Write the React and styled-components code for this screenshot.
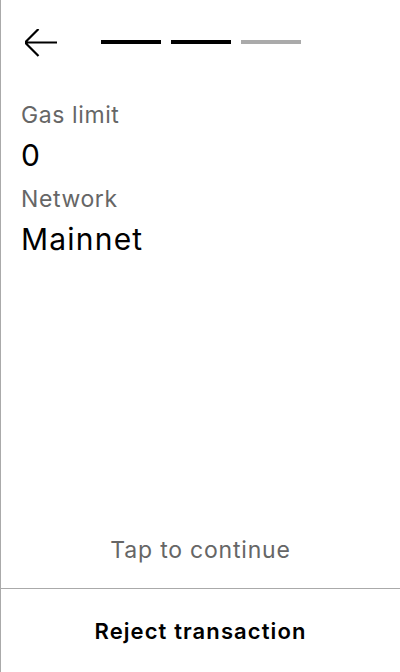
import React from "react";
import styled, { createGlobalStyle } from "styled-components";

const GlobalStyle = createGlobalStyle`
  html, body {
    margin: 0;
    padding: 0;
    background: #fff;
  }
  body {
    font-family: Inter, "Noto Sans", sans-serif;
  }
`;

const steps = [true, true, false];

const fields = [
  { label: "Gas limit", value: "0" },
  { label: "Network", value: "Mainnet" },
];

const Screen = styled.div`
  height: 672px;
  display: flex;
  flex-direction: column;
  border-left: 1px solid #aaaaaa;
  box-sizing: border-box;
`;

const Header = styled.div`
  display: flex;
  align-items: center;
  height: 86px;
  padding-left: 24px;
  gap: 44px;
`;

const BackButton = styled.button`
  background: none;
  border: none;
  padding: 0;
  width: 32px;
  height: 28px;
  display: flex;
  cursor: pointer;
`;

const Steps = styled.div`
  display: flex;
  gap: 10px;
  margin-top: -2px;
`;

const Step = styled.div`
  width: 60px;
  height: 4px;
  background: ${(p) => (p.$done ? "#000" : "#aaaaaa")};
`;

const Body = styled.div`
  flex: 1;
  padding: 14px 20px 0 20px;
  display: flex;
  flex-direction: column;
`;

const Label = styled.div`
  font-size: 23px;
  line-height: 30px;
  letter-spacing: 0.6px;
  color: #666666;
`;

const Value = styled.div`
  font-size: 30px;
  line-height: 40px;
  letter-spacing: 1.2px;
  color: #000;
  margin: 5px 0 9px;
`;

const Spacer = styled.div`
  flex: 1;
`;

const Hint = styled.div`
  text-align: center;
  font-size: 23px;
  line-height: 28px;
  letter-spacing: 0.8px;
  color: #666666;
  padding-bottom: 24px;
`;

const Footer = styled.button`
  height: 84px;
  border: none;
  border-top: 1px solid #aaaaaa;
  background: #fff;
  font-family: Inter, "Noto Sans", sans-serif;
  font-weight: 600;
  font-size: 22px;
  letter-spacing: 1.1px;
  color: #000;
  cursor: pointer;
`;

export default function App() {
  return (
    <>
      <GlobalStyle />
      <Screen>
        <Header>
          <BackButton aria-label="Back">
            <svg width="32" height="28" viewBox="0 0 32 28" fill="none">
              <path d="M0 13.5H32M13.5 0L0 13.5L13.5 27" stroke="#000" strokeWidth="2.2" />
            </svg>
          </BackButton>
          <Steps>
            {steps.map((done, i) => (
              <Step key={i} $done={done} />
            ))}
          </Steps>
        </Header>
        <Body>
          {fields.map((f) => (
            <React.Fragment key={f.label}>
              <Label>{f.label}</Label>
              <Value>{f.value}</Value>
            </React.Fragment>
          ))}
          <Spacer />
          <Hint>Tap to continue</Hint>
        </Body>
        <Footer>Reject transaction</Footer>
      </Screen>
    </>
  );
}
